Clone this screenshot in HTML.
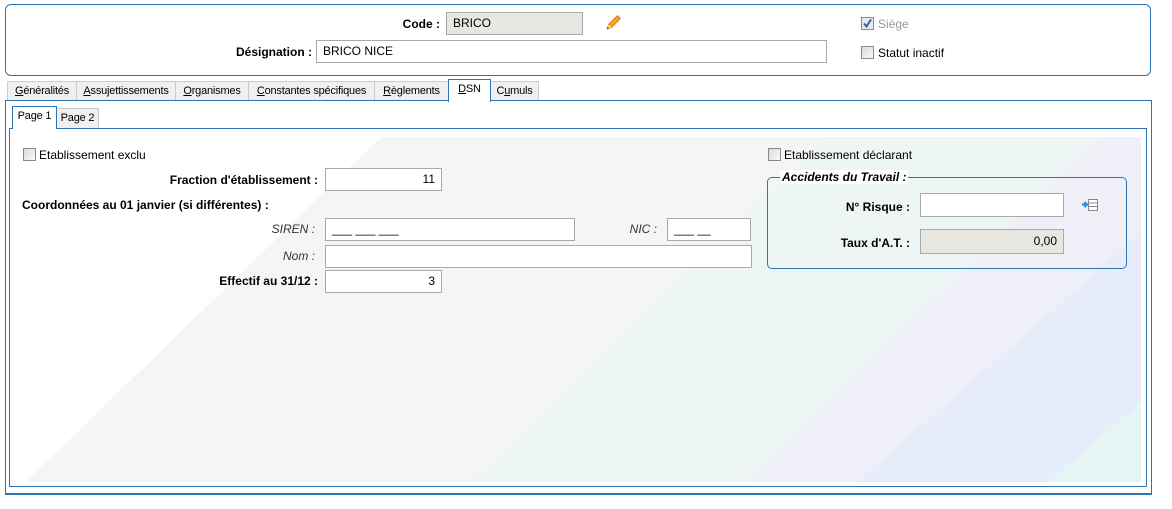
<!DOCTYPE html>
<html><head><meta charset="utf-8"><style>
*{box-sizing:border-box}
body{margin:0;width:1172px;height:509px;background:#fff;font-family:"Liberation Sans",Arial,sans-serif;font-size:12px;color:#000;position:relative;overflow:hidden}
.a{position:absolute}
.lbl{position:absolute;font-weight:bold;text-align:right;white-space:nowrap}
.it{position:absolute;font-style:italic;color:#333;text-align:right;white-space:nowrap}
.inp{position:absolute;background:#fff;border:1px solid #a9a9a9;padding:3px 6px;white-space:nowrap;line-height:15px}
.ro{background:#e8e6e0}
.r{text-align:right}
.cb{position:absolute;width:13px;height:13px;border:1px solid #8a8a8a;background:linear-gradient(135deg,#dcdcdc,#f8f8f8)}
.tab{position:absolute;top:81px;height:20px;border:1px solid #c9cdd2;border-bottom:none;background:#f0f0f0;padding:3px 0 0;text-align:center;font-size:11px;letter-spacing:-0.2px;white-space:nowrap}
</style></head><body>
<div class="a" style="left:5px;top:4px;width:1146px;height:72px;border:1px solid #2e74b5;border-radius:6px"></div>
<div class="lbl" style="left:340px;top:17px;width:100px">Code :</div>
<div class="inp ro" style="left:446px;top:12px;width:137px;height:23px">BRICO</div>
<svg class="a" style="left:604px;top:14px" width="18" height="18" viewBox="0 0 18 18"><path d="M3 15 L4.5 10.5 L13 2 L16 5 L7.5 13.5 Z" fill="#f7a21b" stroke="#c47a10" stroke-width=".8"/><path d="M13 2 L16 5 L17 4 L14 1Z" fill="#e088c8"/><path d="M3 15 L4.5 10.5 L7.5 13.5Z" fill="#f3d6a0"/><path d="M3 15 L3.7 13 L5 14.3Z" fill="#333"/></svg>
<div class="lbl" style="left:200px;top:45px;width:112px">Désignation :</div>
<div class="inp" style="left:316px;top:40px;width:511px;height:23px">BRICO NICE</div>
<div class="cb" style="left:861px;top:17px;background:#e8e8f0"><svg width="11" height="11" style="position:absolute;left:0;top:0"><path d="M2 5.5 L4.5 8.5 L9 1.5" stroke="#3a5a9a" stroke-width="2" fill="none"/></svg></div>
<div class="a" style="left:878px;top:17px;color:#999">Siège</div>
<div class="cb" style="left:861px;top:46px"></div>
<div class="a" style="left:878px;top:46px">Statut inactif</div>

<div class="tab" style="left:7px;width:70px"><u>G</u>énéralités</div>
<div class="tab" style="left:76px;width:100px"><u>A</u>ssujettissements</div>
<div class="tab" style="left:175px;width:74px"><u>O</u>rganismes</div>
<div class="tab" style="left:248px;width:127px"><u>C</u>onstantes spécifiques</div>
<div class="tab" style="left:374px;width:75px"><u>R</u>èglements</div>
<div class="tab" style="left:490px;width:49px">C<u>u</u>muls</div>
<div class="a" style="left:5px;top:100px;width:1147px;height:395px;border:1px solid #2e74b5;border-bottom:2px solid #2e74b5;background:#fff"></div>
<div class="tab" style="left:448px;top:79px;width:43px;height:23px;background:#fff;border-color:#2e74b5;z-index:2"><u>D</u>SN</div>
<svg class="a" style="left:0;top:0" width="1172" height="509">
<defs><clipPath id="c"><rect x="12" y="137" width="1129" height="345"/></clipPath></defs>
<g clip-path="url(#c)">
<polygon points="381,137 825,137 480,482 26,482" fill="#f5f5f5"/>
<polygon points="825,137 1100,137 755,482 470,482" fill="#eef6f5"/>
<polygon points="1100,137 1250,137 905,482 745,482" fill="#eeeff7"/>
<polygon points="1250,137 1450,137 1105,482 857,482" fill="#e6ecfa"/>
<polygon points="1450,137 1600,137 1300,482 1048,482" fill="#e4f5f3"/>
</g></svg>
<div class="a" style="left:9px;top:128px;width:1138px;height:359px;border:1px solid #2e74b5"></div>
<div class="tab" style="left:56px;top:108px;width:43px;background:#f0f0f0">Page 2</div>
<div class="tab" style="left:12px;top:106px;width:45px;height:23px;background:#fff;border-color:#2e74b5;z-index:2">Page 1</div>

<div class="cb" style="left:23px;top:148px"></div>
<div class="a" style="left:39px;top:148px">Etablissement exclu</div>
<div class="lbl" style="left:100px;top:173px;width:218px">Fraction d'établissement :</div>
<div class="inp r" style="left:325px;top:168px;width:117px;height:23px">11</div>
<div class="lbl" style="left:22px;top:198px;text-align:left">Coordonnées au 01 janvier (si différentes) :</div>
<div class="it" style="left:200px;top:222px;width:115px">SIREN :</div>
<div class="inp" style="left:325px;top:218px;width:250px;height:23px">___ ___ ___</div>
<div class="it" style="left:580px;top:222px;width:77px">NIC :</div>
<div class="inp" style="left:667px;top:218px;width:84px;height:23px">___ __</div>
<div class="it" style="left:200px;top:249px;width:115px">Nom :</div>
<div class="inp" style="left:325px;top:245px;width:427px;height:23px"></div>
<div class="lbl" style="left:100px;top:274px;width:218px">Effectif au 31/12 :</div>
<div class="inp r" style="left:325px;top:270px;width:117px;height:23px">3</div>

<div class="cb" style="left:768px;top:148px"></div>
<div class="a" style="left:784px;top:148px">Etablissement déclarant</div>
<div class="a" style="left:767px;top:177px;width:360px;height:92px;border:1px solid #2e74b5;border-radius:5px"></div>
<div class="a" style="left:780px;top:170px;background:#fff;padding:0 2px;font-weight:bold;font-style:italic">Accidents du Travail :</div>
<div class="lbl" style="left:800px;top:200px;width:110px">N° Risque :</div>
<div class="inp" style="left:920px;top:193px;width:144px;height:24px"></div>
<svg class="a" style="left:1081px;top:197px" width="20" height="16"><path d="M1 7.5 H5 M3.5 5 L6 7.5 L3.5 10" stroke="#3a8ad8" stroke-width="2.2" fill="none"/><rect x="7.5" y="2.5" width="9" height="11" fill="#fff" stroke="#888"/><path d="M8 6 H16 M8 9.5 H16" stroke="#888"/></svg>
<div class="lbl" style="left:800px;top:236px;width:110px">Taux d'A.T. :</div>
<div class="inp ro r" style="left:920px;top:229px;width:144px;height:25px;padding-top:4px">0,00</div>
</body></html>
